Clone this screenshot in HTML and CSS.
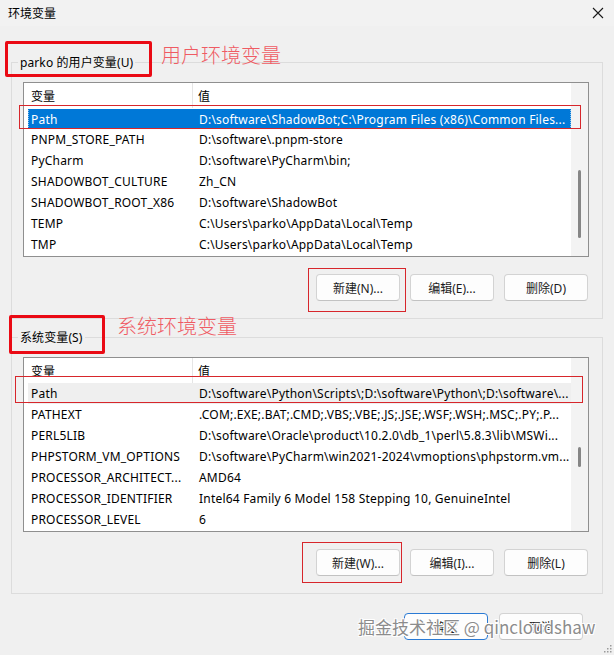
FILE: index.html
```html
<!DOCTYPE html>
<html lang="zh-CN">
<head>
<meta charset="utf-8">
<title>环境变量</title>
<link rel="stylesheet" href="styles.css">
</head>
<body>
<div class="window">
  <header class="titlebar">
    <span class="title">环境变量</span>
    <svg class="close" width="12" height="12" viewBox="0 0 12 12"><path d="M1 1L11 11M11 1L1 11" stroke="#1a1a1a" stroke-width="1.1" fill="none"/></svg>
  </header>
  <main class="content">
    <section class="group">
      <div class="group-title"><span>parko 的用户变量(U)</span></div>
      <div class="list">
        <div class="table">
          <div class="thead"><div class="c1">变量</div><div class="c2">值</div></div>
          <div class="row selected"><div class="c1">Path</div><div class="c2">D:\software\ShadowBot;C:\Program Files (x86)\Common Files...</div></div>
          <div class="row"><div class="c1">PNPM_STORE_PATH</div><div class="c2">D:\software\.pnpm-store</div></div>
          <div class="row"><div class="c1">PyCharm</div><div class="c2">D:\software\PyCharm\bin;</div></div>
          <div class="row"><div class="c1">SHADOWBOT_CULTURE</div><div class="c2">Zh_CN</div></div>
          <div class="row"><div class="c1">SHADOWBOT_ROOT_X86</div><div class="c2">D:\software\ShadowBot</div></div>
          <div class="row"><div class="c1">TEMP</div><div class="c2">C:\Users\parko\AppData\Local\Temp</div></div>
          <div class="row"><div class="c1">TMP</div><div class="c2">C:\Users\parko\AppData\Local\Temp</div></div>
        </div>
        <div class="scrollbar"><div class="thumb thumb-user"></div></div>
      </div>
      <div class="buttons">
        <button class="btn">新建(N)...</button>
        <button class="btn">编辑(E)...</button>
        <button class="btn">删除(D)</button>
      </div>
    </section>

    <section class="group group-system">
      <div class="group-title"><span>系统变量(S)</span></div>
      <div class="list">
        <div class="table">
          <div class="thead"><div class="c1">变量</div><div class="c2">值</div></div>
          <div class="row inactive"><div class="c1">Path</div><div class="c2">D:\software\Python\Scripts\;D:\software\Python\;D:\software\...</div></div>
          <div class="row"><div class="c1">PATHEXT</div><div class="c2">.COM;.EXE;.BAT;.CMD;.VBS;.VBE;.JS;.JSE;.WSF;.WSH;.MSC;.PY;.P...</div></div>
          <div class="row"><div class="c1">PERL5LIB</div><div class="c2">D:\software\Oracle\product\10.2.0\db_1\perl\5.8.3\lib\MSWi...</div></div>
          <div class="row"><div class="c1">PHPSTORM_VM_OPTIONS</div><div class="c2">D:\software\PyCharm\win2021-2024\vmoptions\phpstorm.vm...</div></div>
          <div class="row"><div class="c1">PROCESSOR_ARCHITECT...</div><div class="c2">AMD64</div></div>
          <div class="row"><div class="c1">PROCESSOR_IDENTIFIER</div><div class="c2">Intel64 Family 6 Model 158 Stepping 10, GenuineIntel</div></div>
          <div class="row"><div class="c1">PROCESSOR_LEVEL</div><div class="c2">6</div></div>
        </div>
        <div class="scrollbar"><div class="thumb thumb-system"></div></div>
      </div>
      <div class="buttons">
        <button class="btn">新建(W)...</button>
        <button class="btn">编辑(I)...</button>
        <button class="btn">删除(L)</button>
      </div>
    </section>

    <div class="dialog-buttons">
      <button class="btn btn-default">确定</button>
      <button class="btn">取消</button>
    </div>
  </main>

  <div class="anno anno-box thick box-a"></div>
  <div class="anno anno-box box-b"></div>
  <div class="anno anno-box box-c"></div>
  <div class="anno anno-box thick box-d"></div>
  <div class="anno anno-box box-e"></div>
  <div class="anno anno-box box-f"></div>
  <div class="anno anno-text text-a">用户环境变量</div>
  <div class="anno anno-text text-b">系统环境变量</div>

  <div class="watermark">掘金技术社区 @ qincloudshaw</div>
  <svg class="grip" width="8" height="8" viewBox="0 0 8 8">
    <rect x="6" y="0" width="1.5" height="1.5" fill="#9a9a9a"/>
    <rect x="3" y="3" width="1.5" height="1.5" fill="#9a9a9a"/>
    <rect x="6" y="3" width="1.5" height="1.5" fill="#9a9a9a"/>
    <rect x="0" y="6" width="1.5" height="1.5" fill="#9a9a9a"/>
    <rect x="3" y="6" width="1.5" height="1.5" fill="#9a9a9a"/>
    <rect x="6" y="6" width="1.5" height="1.5" fill="#9a9a9a"/>
  </svg>
</div>
</body>
</html>
```

FILE: styles.css
```css
* { box-sizing: border-box; }

body {
  margin: 0;
  background: #f0f0f0;
  font-family: "Noto Sans", "Noto Sans CJK SC", sans-serif;
  font-size: 12px;
  color: #000;
}

.window {
  position: relative;
  width: 614px;
  height: 655px;
  overflow: hidden;
  background: #f0f0f0;
}

.titlebar {
  height: 26px;
  display: flex;
  align-items: center;
  justify-content: space-between;
  padding: 0 10px 0 8px;
  background: #f2f2f2;
}

.title {
  font-family: "Noto Sans CJK SC", sans-serif;
  font-size: 12px;
  line-height: 16px;
  color: #000;
}

.close { display: block; }

.content {
  padding: 36px 11px 0 11px;
}

.group {
  border: 1px solid #dcdcdc;
  padding: 0 13px 17px 11px;
}

.group-system { margin-top: 18px; }

.group-title {
  margin: -8px 0 0 -5px;
  height: 16px;
  line-height: 16px;
}

.group-title span {
  background: #f0f0f0;
  padding: 0 2px;
  letter-spacing: 0.1px;
}

.list {
  display: flex;
  height: 175px;
  margin-top: 11px;
  border: 1px solid #8f8f8f;
  background: #fff;
}

.table {
  flex: 1;
  min-width: 0;
}

.thead {
  display: flex;
  height: 25px;
}

.thead .c1 {
  width: 169px;
  padding-left: 7px;
  border-right: 1px solid #e5e5e5;
  display: flex;
  align-items: center;
  font-family: "Noto Sans CJK SC", sans-serif;
}

.thead .c2 {
  padding-left: 5px;
  display: flex;
  align-items: center;
  font-family: "Noto Sans CJK SC", sans-serif;
}

.row {
  display: flex;
  align-items: center;
  height: 21px;
  margin-left: 4px;
  white-space: nowrap;
  letter-spacing: 0.2px;
}

.row .c1 {
  width: 168px;
  padding-left: 3px;
  overflow: hidden;
}

.row .c2 {
  flex: 1;
  min-width: 0;
  padding-left: 3px;
  overflow: hidden;
}

.row.selected {
  background: #0078d7;
  color: #fff;
  border-top: 1px solid #fff;
  outline: 1px dotted rgba(255, 255, 255, 0.55);
  outline-offset: -1px;
}

.row.inactive {
  background: #efefef;
}

.scrollbar {
  width: 17px;
  flex: none;
  background: #f3f3f3;
  display: flex;
  flex-direction: column;
  align-items: center;
}

.thumb {
  width: 3px;
  border-radius: 2px;
  background: #868686;
}

.thumb-user { margin-top: 87px; height: 68px; }
.thumb-system { margin-top: 89px; height: 20px; }

.buttons {
  display: flex;
  justify-content: flex-end;
  gap: 10px;
  margin-top: 17px;
  padding-right: 1px;
}

.btn {
  width: 84px;
  height: 27px;
  padding: 0;
  border: 1px solid #d3d3d3;
  border-bottom-color: #c2c2c2;
  border-radius: 4px;
  background: #fdfdfd;
  font-family: "Noto Sans", "Noto Sans CJK SC", sans-serif;
  font-size: 12px;
  color: #1b1b1b;
}

.dialog-buttons {
  display: flex;
  justify-content: flex-end;
  gap: 11px;
  margin-top: 19px;
  padding-right: 20px;
}

.btn-default {
  border: 1px solid #2a7ad4;
}

/* annotations drawn over the screenshot */
.anno { position: absolute; }

.anno-box {
  border: 1px solid #d7262b;
}

.anno-box.thick {
  border: 3px solid #ea0a14;
  border-radius: 2px;
}

.box-a { left: 5px; top: 41px; width: 147px; height: 36px; }
.box-b { left: 19px; top: 105px; width: 562px; height: 24px; }
.box-c { left: 308px; top: 268px; width: 98px; height: 44px; }
.box-d { left: 9px; top: 315px; width: 96px; height: 39px; }
.box-e { left: 15px; top: 376px; width: 568px; height: 27px; }
.box-f { left: 302px; top: 542px; width: 100px; height: 41px; }

.anno-text {
  font-family: "Noto Sans CJK SC", sans-serif;
  font-weight: 300;
  font-size: 20px;
  line-height: 24px;
  color: #ef5b63;
  white-space: nowrap;
}

.text-a { left: 161px; top: 43px; }
.text-b { left: 117px; top: 314px; }

.watermark {
  position: absolute;
  left: 358px;
  top: 615px;
  font-family: "Noto Sans CJK SC", sans-serif;
  font-size: 17px;
  line-height: 24px;
  color: #8c8c8c;
  white-space: nowrap;
  text-shadow: 0 0 1px #fff, 1px 1px 0 #fff, -1px -1px 0 #fff, 1px -1px 0 #fff, -1px 1px 0 #fff;
}

.grip {
  position: absolute;
  right: 2px;
  bottom: 2px;
}
```
